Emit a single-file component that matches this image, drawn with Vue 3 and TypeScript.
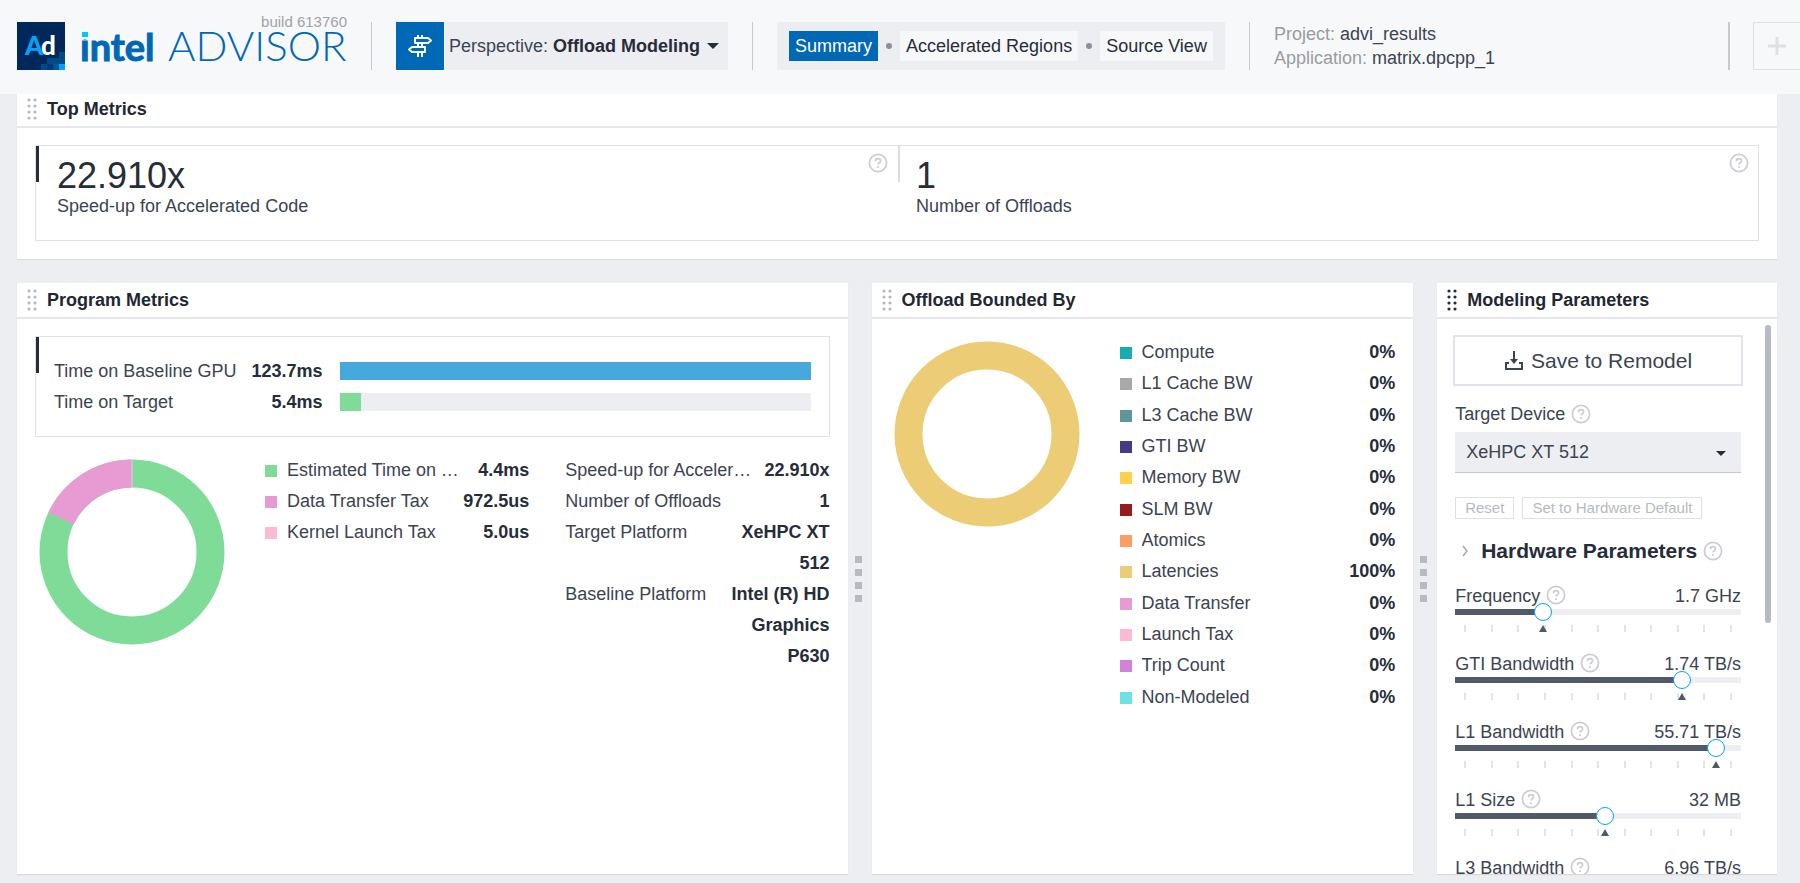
<script setup lang="ts">
import { ref } from 'vue'

interface Row { label: string; value: string; color?: string }
interface Param { id: string; label: string; value: string; pos: number }

const times = [
  { label: 'Time on Baseline GPU', value: '123.7ms', color: '#47a8db', share: 100 },
  { label: 'Time on Target', value: '5.4ms', color: '#7fdc98', share: 4.4 },
]
const taxes: Row[] = [
  { label: 'Estimated Time on Target', value: '4.4ms', color: '#7fdc98' },
  { label: 'Data Transfer Tax', value: '972.5us', color: '#e89ad2' },
  { label: 'Kernel Launch Tax', value: '5.0us', color: '#fdbbd3' },
]
const facts: Row[] = [
  { label: 'Speed-up for Accelerated Code', value: '22.910x' },
  { label: 'Number of Offloads', value: '1' },
  { label: 'Target Platform', value: 'XeHPC XT 512' },
  { label: 'Baseline Platform', value: 'Intel (R) HD Graphics P630' },
]
const bounds: Row[] = [
  { label: 'Compute', value: '0%', color: '#17acad' },
  { label: 'L1 Cache BW', value: '0%', color: '#a8a8a8' },
  { label: 'L3 Cache BW', value: '0%', color: '#5f9696' },
  { label: 'GTI BW', value: '0%', color: '#463a87' },
  { label: 'Memory BW', value: '0%', color: '#ffd04b' },
  { label: 'SLM BW', value: '0%', color: '#951b1e' },
  { label: 'Atomics', value: '0%', color: '#ff9e64' },
  { label: 'Latencies', value: '100%', color: '#eccc74' },
  { label: 'Data Transfer', value: '0%', color: '#e89ad2' },
  { label: 'Launch Tax', value: '0%', color: '#fdbbd3' },
  { label: 'Trip Count', value: '0%', color: '#d183d9' },
  { label: 'Non-Modeled', value: '0%', color: '#6fe1e3' },
]
const params = ref<Param[]>([
  { id: 'frequency', label: 'Frequency', value: '1.7 GHz', pos: 295 },
  { id: 'gti', label: 'GTI Bandwidth', value: '1.74 TB/s', pos: 812 },
  { id: 'l1bw', label: 'L1 Bandwidth', value: '55.71 TB/s', pos: 942 },
  { id: 'l1size', label: 'L1 Size', value: '32 MB', pos: 526 },
  { id: 'l3bw', label: 'L3 Bandwidth', value: '6.96 TB/s', pos: 700 },
])
const device = ref('XeHPC XT 512')
const ringLength = 2 * Math.PI * 78.5
const taxLength = ringLength * 0.181
</script>

<template>
  <div class="page">
    <header class="top">
      <div class="brand">
        <svg class="app-logo" viewBox="0 0 48 48" role="img" aria-label="Advisor">
          <rect width="48" height="48" fill="#00285a" />
          <rect x="42" y="30" width="6" height="6" fill="#004a86" />
          <rect x="30" y="36" width="18" height="6" fill="#004a86" />
          <rect x="24" y="42" width="6" height="6" fill="#004a86" />
          <rect x="30" y="42" width="6" height="6" fill="#00377c" />
          <rect x="36" y="42" width="6" height="6" fill="#005696" />
          <rect x="42" y="42" width="6" height="6" fill="#00a3f6" />
          <text x="8" y="33" class="mark"><tspan fill="#00a3f6">A</tspan><tspan x="24" fill="#fff">d</tspan></text>
        </svg>
        <div class="wordmark">
          <span class="build">build 613760</span>
          <svg class="word" viewBox="0 0 268 44" role="img" aria-label="intel ADVISOR">
            <text x="-1" y="33" class="intel">intel</text>
            <rect x="-1" y="2" width="11" height="9" fill="#f7f8fa" />
            <rect x="1" y="4" width="6" height="5" fill="#00c7fd" />
            <text x="87" y="33" class="advisor">ADVISOR</text>
          </svg>
        </div>
      </div>
      <i class="rule"></i>
      <button class="perspective" type="button">
        <svg class="sign" viewBox="0 0 48 48" fill="none" stroke="#fff" stroke-width="2" stroke-linejoin="round">
          <path d="M22 13v3M26 13v3M19 16h13l3 2.500l-3 2.500H19zM22 21v4M26 21v4M29 25H16l-3 2.500l3 2.500h13zM22 30v5M26 30v5" />
        </svg>
        <span class="persp-text">Perspective: <b>Offload Modeling</b>
          <svg class="caret" viewBox="0 0 12 6"><path d="M0 0h12l-6 6z" fill="#262d3a" /></svg>
        </span>
      </button>
      <i class="rule"></i>
      <nav class="tabs">
        <a href="#summary" class="active">Summary</a><i></i>
        <a href="#regions">Accelerated Regions</a><i></i>
        <a href="#source">Source View</a>
      </nav>
      <i class="rule"></i>
      <div class="project">
        <div>Project: <span>advi_results</span></div>
        <div>Application: <span>matrix.dpcpp_1</span></div>
      </div>
      <i class="rule last"></i>
      <button class="add" type="button" aria-label="Add">
        <svg viewBox="0 0 18 18"><path d="M9 0v18M0 9h18" stroke="#dfe0e6" stroke-width="3" /></svg>
      </button>
    </header>

    <svg class="defs" aria-hidden="true">
      <symbol id="help" viewBox="0 0 20 20">
        <circle cx="10" cy="10" r="8.600" fill="none" stroke="#cccdd3" stroke-width="1.700" />
        <path d="M7.400 8.200c0-1.700 1.200-2.600 2.600-2.600s2.600.9 2.600 2.300c0 1.800-2.600 1.900-2.600 3.700" fill="none" stroke="#cccdd3" stroke-width="1.700" />
        <circle cx="10" cy="14" r="1.100" fill="#cccdd3" />
      </symbol>
      <symbol id="grip" viewBox="0 0 10 22">
        <g fill="currentColor">
          <circle cx="2" cy="2" r="1.600" /><circle cx="8" cy="2" r="1.600" />
          <circle cx="2" cy="8" r="1.600" /><circle cx="8" cy="8" r="1.600" />
          <circle cx="2" cy="14" r="1.600" /><circle cx="8" cy="14" r="1.600" />
          <circle cx="2" cy="20" r="1.600" /><circle cx="8" cy="20" r="1.600" />
        </g>
      </symbol>
    </svg>

    <main>
      <section class="panel metrics">
        <h2><svg class="grip"><use href="#grip" /></svg>Top Metrics</h2>
        <div class="frame pair">
          <div class="metric">
            <div class="big">22.910x</div>
            <div class="cap">Speed-up for Accelerated Code</div>
            <svg class="help corner"><use href="#help" /></svg>
          </div>
          <div class="metric">
            <div class="big">1</div>
            <div class="cap">Number of Offloads</div>
            <svg class="help corner"><use href="#help" /></svg>
          </div>
        </div>
      </section>

      <div class="columns">
        <section class="panel">
          <h2><svg class="grip"><use href="#grip" /></svg>Program Metrics</h2>
          <div class="frame times">
            <template v-for="t in times" :key="t.label">
              <span>{{ t.label }}</span>
              <b>{{ t.value }}</b>
              <div class="bar"><div :style="{ width: t.share + '%', background: t.color }"></div></div>
            </template>
          </div>
          <div class="breakdown">
            <svg class="donut" viewBox="0 0 186 186">
              <circle cx="93" cy="93" r="78.500" fill="none" stroke="#7fdc98" stroke-width="28" />
              <circle cx="93" cy="93" r="78.500" fill="none" stroke="#e89ad2" stroke-width="28"
                :stroke-dasharray="`${taxLength} ${ringLength - taxLength}`" :stroke-dashoffset="taxLength" transform="rotate(-90 93 93)" />
              <path d="M93 0v29" stroke="#f3c4e4" />
            </svg>
            <ul class="rows">
              <li v-for="r in taxes" :key="r.label">
                <i class="chip" :style="{ background: r.color }"></i>
                <span class="name">{{ r.label }}</span><b>{{ r.value }}</b>
              </li>
            </ul>
            <ul class="rows facts">
              <li v-for="r in facts" :key="r.label">
                <span class="name">{{ r.label }}</span><b>{{ r.value }}</b>
              </li>
            </ul>
          </div>
        </section>

        <div class="splitter"><i></i><i></i><i></i><i></i></div>

        <section class="panel">
          <h2><svg class="grip"><use href="#grip" /></svg>Offload Bounded By</h2>
          <div class="bounded">
            <svg class="donut" viewBox="0 0 186 186">
              <circle cx="93" cy="93" r="78.500" fill="none" stroke="#eccc74" stroke-width="28" />
            </svg>
            <ul class="rows spread">
              <li v-for="r in bounds" :key="r.label">
                <i class="chip" :style="{ background: r.color }"></i>
                <span class="name">{{ r.label }}</span><b>{{ r.value }}</b>
              </li>
            </ul>
          </div>
        </section>

        <div class="splitter"><i></i><i></i><i></i><i></i></div>

        <section class="panel modeling">
          <h2><svg class="grip dark"><use href="#grip" /></svg>Modeling Parameters</h2>
          <div class="form">
            <div class="thumb"></div>
            <button class="save" type="button">
              <svg viewBox="0 0 20 20" fill="none" stroke="#3b4452" stroke-width="2">
                <path d="M5 12H2v6h16v-6h-3M10 0v9" /><path d="M6 8h8l-4 5z" fill="#3b4452" stroke="none" />
              </svg>
              Save to Remodel
            </button>
            <div class="field"><label for="device">Target Device</label><svg class="help"><use href="#help" /></svg></div>
            <div class="select">
              <select id="device" v-model="device"><option>XeHPC XT 512</option></select>
              <svg viewBox="0 0 10 5"><path d="M0 0h10l-5 5z" fill="#262d3a" /></svg>
            </div>
            <div class="resets">
              <button type="button" disabled>Reset</button>
              <button type="button" disabled>Set to Hardware Default</button>
            </div>
            <h3>
              <svg class="chev" viewBox="0 0 6 12"><path d="M1 1l4 5l-4 5" fill="none" stroke="#a5a8b0" stroke-width="1.500" /></svg>
              Hardware Parameters<svg class="help"><use href="#help" /></svg>
            </h3>
            <div v-for="p in params" :key="p.id" class="param" :style="{ '--pos': p.pos / 1000 }">
              <div class="field">
                <label :for="p.id">{{ p.label }}</label><svg class="help"><use href="#help" /></svg>
                <output :for="p.id">{{ p.value }}</output>
              </div>
              <input :id="p.id" v-model.number="p.pos" type="range" min="0" max="1000">
              <div class="ticks"><i v-for="n in 11" :key="n"></i><svg viewBox="0 0 8 7"><path d="M4 0l4 7H0z" fill="#505a68" /></svg></div>
            </div>
          </div>
        </section>
      </div>
    </main>
  </div>
</template>

<style>
body { margin: 0; background: #edeef2; }
</style>

<style scoped>
* { box-sizing: border-box; }
.page {
  height: 100vh; display: flex; flex-direction: column; overflow: hidden;
  font: 18px/24px Arial, "Liberation Sans", sans-serif; color: #3b4452; background: #edeef2;
}
b { color: #262d3a; }
button { font: inherit; color: inherit; padding: 0; }
.defs { position: absolute; width: 0; height: 0; }
.top { display: flex; align-items: center; flex: none; height: 94px; padding: 0 0 2px 17px; background: #f7f8fa; overflow: hidden; }
.brand { display: flex; flex: none; }
.app-logo { width: 48px; height: 48px; }
.mark { font: 900 26px Lato, sans-serif; }
.wordmark { position: relative; width: 268px; height: 48px; margin-left: 14px; }
.word { position: absolute; left: 2px; top: 6px; width: 268px; height: 44px; overflow: visible; }
.build { position: absolute; right: 0; top: -9px; font-size: 15px; line-height: 18px; color: #a0a2a8; }
.intel { font: 700 38px Lato, sans-serif; fill: #0068b5; stroke: #0068b5; stroke-width: 1px; }
.advisor { font: 300 42px Lato, sans-serif; fill: #0068b5; }
.rule { flex: none; width: 1px; height: 48px; margin: 0 24px; background: #c9cad0; }
.perspective { display: flex; flex: none; gap: 1px; border: 0; background: none; }
.sign { width: 48px; height: 48px; background: #0068b5; }
.persp-text { display: flex; align-items: center; height: 48px; padding: 0 9px 0 4px; background: #edeef2; white-space: pre; }
.caret { width: 12px; height: 6px; margin-left: 7px; }
.tabs { display: flex; flex: none; align-items: center; height: 48px; padding: 0 12px; background: #edeef2; }
.tabs a { padding: 0 6px; line-height: 30px; color: #262d3a; background: #f7f8fa; text-decoration: none; }
.tabs a.active { color: #fff; background: #0068b5; }
.tabs i { width: 6px; height: 6px; margin: 0 8px; border-radius: 50%; background: #8b8f99; }
.project { flex: 1; color: #9a9ca2; white-space: nowrap; }
.project span { color: #3b4452; }
.rule.last { width: 2px; margin-right: 23px; }
.add { flex: none; display: flex; align-items: center; width: 48px; height: 48px; margin-right: -1px; padding: 0 14px; border: 1px solid #dfe0e6; border-right: 0; background: none; }
.add svg { width: 18px; height: 18px; }
main { flex: 1; min-height: 0; display: flex; flex-direction: column; gap: 24px; padding: 0 23px 9px 17px; }
.panel { min-width: 0; background: #fff; box-shadow: 0 1px 1px #d9dae0; overflow: hidden; }
h2 { display: flex; align-items: center; height: 36px; margin: 0; padding-left: 10px; gap: 10px; border-bottom: 2px solid #e6e7ea; font-size: 18px; line-height: 24px; color: #1f2733; }
.metrics { flex: none; padding-bottom: 18px; }
.metrics h2 { height: 34px; padding-bottom: 2px; }
.grip { width: 10px; height: 22px; color: #b5b8c3; }
.grip.dark { color: #262d3a; }
.frame { position: relative; margin: 17px 18px 0; border: 1px solid #e0e1e7; }
.frame::before { content: ""; position: absolute; left: 0; top: 0; width: 3px; height: 36px; background: #262d3a; }
.pair { display: grid; grid-template-columns: 1fr 1fr; height: 96px; }
.metric { position: relative; padding: 12px 21px; }
.metric + .metric { padding-left: 19px; }
.metric + .metric::before { content: ""; position: absolute; left: 1px; top: 0; width: 2px; height: 36px; background: #dcdde4; }
.big { font-size: 36px; line-height: 36px; color: #262d3a; }
.help { flex: none; width: 20px; height: 20px; }
.corner { position: absolute; right: 9px; top: 7px; }
.columns { flex: 1; min-height: 0; display: grid; grid-template-columns: 831fr 24px 542fr 24px 340fr; grid-template-rows: minmax(0, 1fr); }
.times { display: grid; grid-template-columns: auto auto 1fr; column-gap: 15px; padding: 18px 18px 19px; align-items: center; grid-auto-rows: 31px; }
.times b { padding-right: 3px; text-align: right; }
.bar { height: 18px; background: #edeef2; }
.bar div { height: 100%; }
.breakdown, .bounded { display: flex; align-items: flex-start; padding: 18px 18px 0 22px; }
.donut { flex: none; width: 186px; height: 186px; margin-top: 4px; }
.rows { flex: 1; min-width: 0; margin: 0 0 0 40px; padding: 0; list-style: none; line-height: 31px; }
.rows li { display: flex; }
.rows.facts { margin-left: 36px; }
.name { flex: 1; overflow: hidden; white-space: nowrap; text-overflow: ellipsis; }
.rows b { max-width: 100px; margin-left: 12px; text-align: right; }
.chip { flex: none; width: 12px; height: 12px; margin: 10px 10px 0 0; }
.spread { display: grid; grid-auto-rows: 1fr; min-height: 376px; }
.splitter { display: flex; flex-direction: column; align-items: center; justify-content: center; gap: 6px; padding-right: 3px; }
.splitter i { width: 7px; height: 7px; background: #b7bac3; }
.modeling { display: flex; flex-direction: column; }
.modeling h2 { flex: none; }
.form { position: relative; flex: 1; min-height: 0; overflow: hidden; padding: 16px 36px 0 18px; }
.thumb { position: absolute; right: 6px; top: 6px; width: 6px; height: 298px; border-radius: 3px; background: #b7bac3; }
.save { display: flex; align-items: center; justify-content: center; gap: 7px; width: calc(100% + 4px); height: 51px; margin: 0 -2px; border: 2px solid #e3e4ea; background: #fff; font-size: 21px; }
.save svg { width: 20px; height: 20px; }
.field { display: flex; align-items: center; gap: 6px; height: 24px; white-space: nowrap; }
.save + .field { margin-top: 16px; }
output { margin-left: auto; }
.select { position: relative; margin-top: 6px; }
select { display: block; width: 100%; height: 41px; padding: 0 11px; border: 0; border-bottom: 1px solid #c8c9cf; border-radius: 0; appearance: none; background: #edeef2; font: inherit; color: inherit; }
.select svg { position: absolute; right: 15px; top: 19px; width: 10px; height: 5px; }
.resets { display: flex; gap: 8px; margin-top: 24px; }
.resets button { height: 22px; padding: 0 9px; border: 1px solid #dfe0e6; background: #fff; font-size: 15px; line-height: 18px; color: #b7bac3; }
h3 { display: flex; align-items: center; gap: 6px; height: 30px; margin: 17px 0 0; padding-left: 7px; font-size: 21px; color: #262d3a; white-space: nowrap; }
.chev { width: 6px; height: 12px; margin-right: 7px; }
.param { height: 68px; }
h3 + .param { margin-top: 18px; }
.param .field { height: 23px; }
.param .help { margin-bottom: 2px; }
input[type="range"] {
  display: block; width: 100%; height: 18px; margin: -4px 0 0; appearance: none; position: relative;
  background: linear-gradient(90deg, #505a68 calc(9px + var(--pos) * (100% - 18px)), #edeef2 0) center / 100% 6px no-repeat;
}
input[type="range"]::-webkit-slider-thumb { appearance: none; width: 18px; height: 18px; border: 1px solid #00a3f6; border-radius: 50%; background: #fff; }
.ticks { position: relative; display: flex; justify-content: space-between; height: 7px; margin-top: 4px; padding: 0 9px; }
.ticks i { width: 2px; height: 7px; background: #e3e4ea; }
.ticks svg { position: absolute; left: calc(5px + var(--pos) * (100% - 18px)); top: 0; width: 8px; height: 7px; }
</style>
